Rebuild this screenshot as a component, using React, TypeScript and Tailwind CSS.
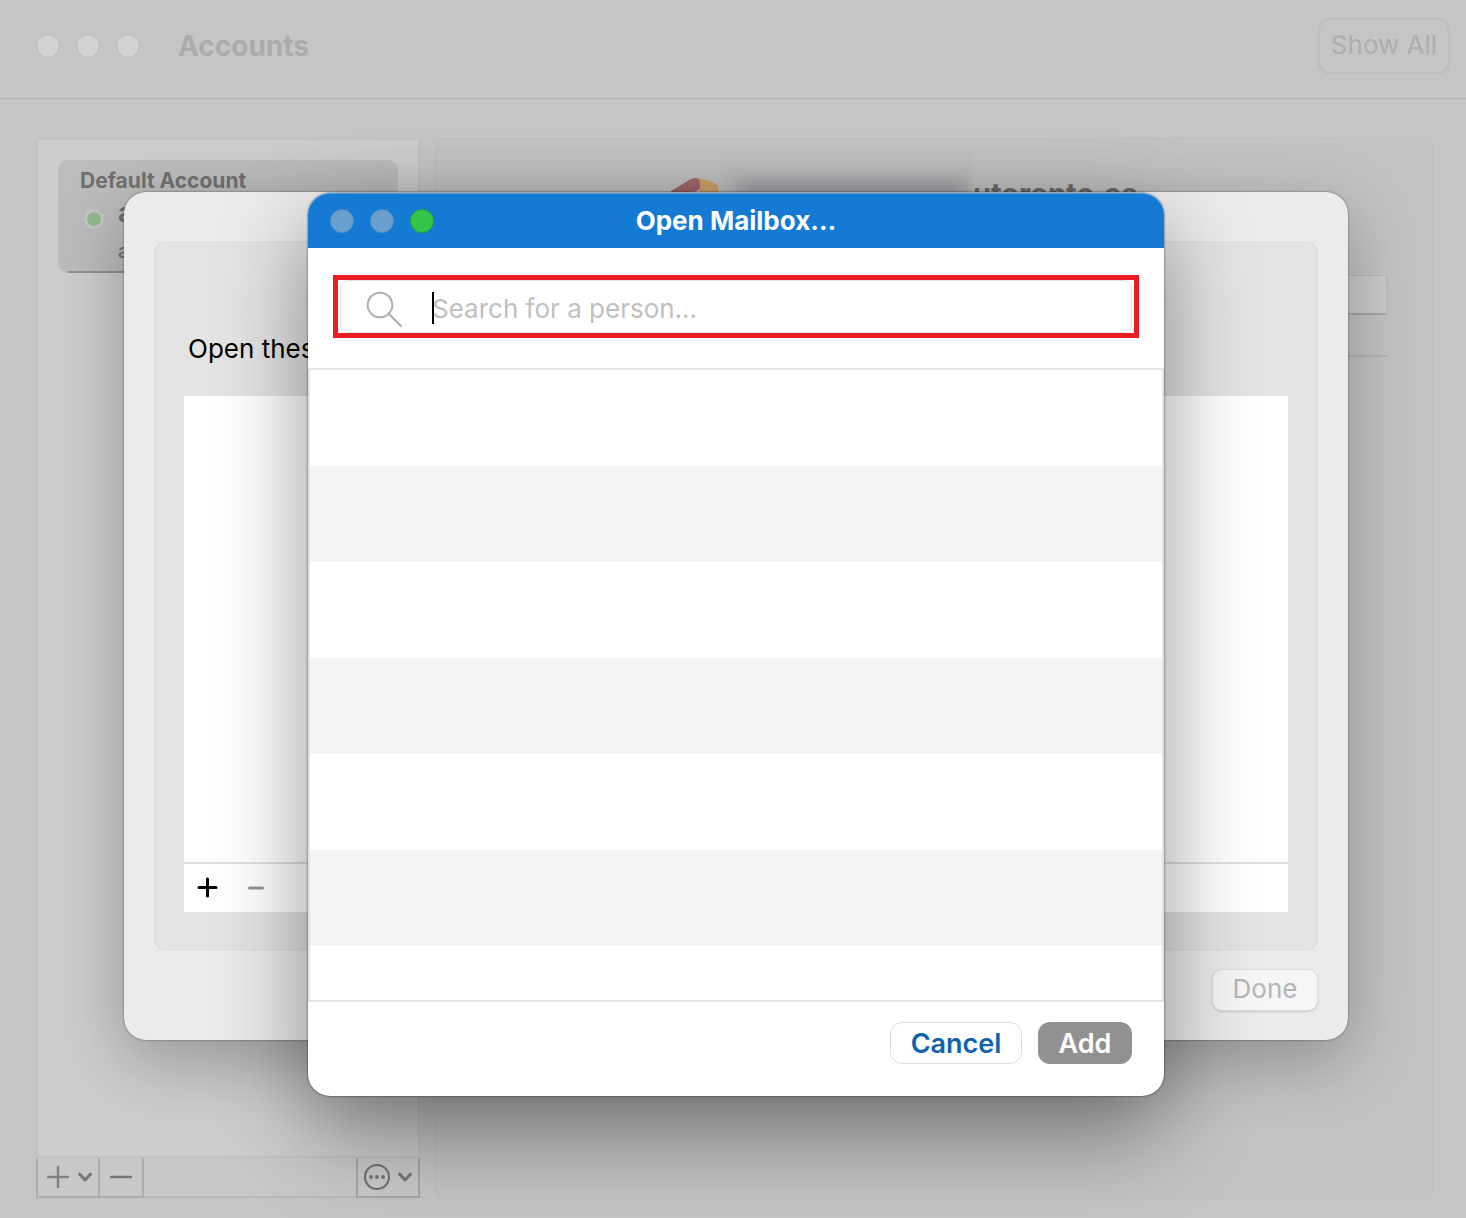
// App.tsx
import { useState } from 'react';

const EMPTY_ROWS = [0, 1, 2, 3, 4, 5];

function ChevronIcon() {
  return (
    <svg width="16" height="12" viewBox="0 0 16 12" fill="none" aria-hidden="true">
      <path d="M2.5 3 8 9l5.5-6" stroke="#757575" strokeWidth="3" strokeLinecap="round" strokeLinejoin="round" />
    </svg>
  );
}

function Sidebar() {
  return (
    <aside className="flex w-96 shrink-0 flex-col pb-[2px]">
      <div className="flex-1 border-2 border-[#c2c2c2] bg-[#cdcdcd] px-5 pt-5">
        <div className="flex h-[113px] flex-col rounded-[10px] bg-[#bcbcbc] pl-[22px] pt-[9px] text-[#707070]">
          <h2 className="text-[21px] font-bold leading-6">Default Account</h2>
          <div className="flex h-[42px] items-end gap-[14px] pl-1 pb-[6px]">
            <span className="h-5 w-5 rounded-full border-[3px] border-[#c6c6c6] bg-[#91bb8e]" />
            <span className="text-[26px] font-bold leading-8">a</span>
          </div>
          <p className="flex-1 pl-[38px] pt-1 text-[20px] font-medium leading-6">a</p>
          <div className="-ml-3 mr-3 h-[2px] bg-[#8f8f8f]" />
        </div>
      </div>
      <div className="flex h-10 border-b-2 border-[#b9b9b9] bg-[#c8c8c8]">
        <button aria-label="Add account" className="-mb-[2px] flex w-[64px] items-center gap-2 border-2 border-t-0 border-[#adadad] pl-[9px]">
          <svg width="22" height="22" viewBox="0 0 22 22" fill="none" aria-hidden="true">
            <path d="M11 1v20M1 11h20" stroke="#808080" strokeWidth="2.4" strokeLinecap="round" />
          </svg>
          <ChevronIcon />
        </button>
        <button aria-label="Remove account" className="-mb-[2px] flex w-11 items-center justify-center border-r-2 border-b-2 border-[#adadad]">
          <svg width="22" height="22" viewBox="0 0 22 22" fill="none" aria-hidden="true">
            <path d="M1 11h20" stroke="#757575" strokeWidth="2.4" strokeLinecap="round" />
          </svg>
        </button>
        <button aria-label="More options" className="-mb-[2px] ml-auto flex w-[64px] items-center gap-[6px] border-2 border-t-0 border-[#a6a6a6] pl-[5px]">
          <svg width="28" height="28" viewBox="0 0 28 28" fill="none" className="shrink-0" aria-hidden="true">
            <circle cx="14" cy="14" r="12" stroke="#707070" strokeWidth="2" />
            <circle cx="8" cy="14" r="1.9" fill="#707070" />
            <circle cx="14" cy="14" r="1.9" fill="#707070" />
            <circle cx="20" cy="14" r="1.9" fill="#707070" />
          </svg>
          <ChevronIcon />
        </button>
      </div>
    </aside>
  );
}

function AccountDetail() {
  return (
    <section className="flex-1 rounded-[10px] border border-[#bfbfbf] bg-[#c3c3c3] px-[46px]">
      <div className="flex h-[136px] items-start justify-center pt-3 pr-[60px]">
        <svg width="50" height="60" viewBox="0 0 50 60" className="mt-[26px]" aria-hidden="true">
          <path d="M0 14 20 2q5-2 9 0v10L14 20v20H0z" fill="#a5686c" />
          <path d="M25 1q18 3 21 7 2 2 2 8v24H29V5q-1-3-4-4z" fill="#d3a468" />
        </svg>
        <span className="h-[60px] w-[252px] overflow-hidden bg-[#c0c0c0]">
          <span className="mt-[28px] ml-4 block h-8 w-[230px] bg-[#a2a4a8] blur-[8px]" />
        </span>
        <span className="pt-[25px] text-[29px] font-bold leading-9 text-[#6c6c6c]">utoronto.ca</span>
      </div>
      <input
        aria-label="Account description"
        className="block h-10 w-full border border-b-2 border-[#b7b7b7] border-b-[#a6a6a6] bg-[#cbcbcb] px-3"
      />
      <div className="mt-10 h-[2px] bg-[#b4b4b4]" />
    </section>
  );
}

function DelegationSheet() {
  return (
    <div className="absolute inset-x-0 top-48 flex justify-center pl-[6px]">
      <div className="flex w-full max-w-[1224px] flex-col rounded-[22px] bg-[#ebebeb] px-[30px] pt-[50px] pb-[29px] shadow-[0_0_2px_rgba(0,0,0,0.6),0_20px_70px_rgba(0,0,0,0.28)]">
        <div className="rounded-[10px] border border-[#d8d8d8] bg-[#e4e4e4] px-[29px] pt-[88px] pb-[37px]">
          <p className="pl-1 text-[26px] leading-9 text-black">Open these</p>
          <div className="mt-[29px] bg-white">
            <div className="h-[466px]" />
            <div className="flex h-[50px] items-center gap-[28px] border-t-2 border-[#e0e0e0] pl-3">
              <button aria-label="Add mailbox">
                <svg width="22" height="22" viewBox="0 0 22 22" fill="none" aria-hidden="true">
                  <path d="M11.5 2v17M3 10.5h17" stroke="#000" strokeWidth="3" strokeLinecap="round" />
                </svg>
              </button>
              <button aria-label="Remove mailbox">
                <svg width="22" height="22" viewBox="0 0 22 22" fill="none" aria-hidden="true">
                  <path d="M3.5 11h13" stroke="#969696" strokeWidth="3" strokeLinecap="round" />
                </svg>
              </button>
            </div>
          </div>
        </div>
        <button className="mt-[19px] h-[42px] w-[106px] self-end rounded-[10px] border border-[#dedede] bg-[#f6f6f6] pb-[2px] text-[26px] leading-8 text-[#b5b5b5] shadow-[0_1px_2px_rgba(0,0,0,0.15)]">
          Done
        </button>
      </div>
    </div>
  );
}

function OpenMailboxDialog() {
  const [query, setQuery] = useState('');

  return (
    <div className="absolute inset-x-0 top-[193px] flex justify-center pl-[6px]">
      <div
        role="dialog"
        aria-labelledby="dialog-title"
        className="w-full max-w-[856px] rounded-[22px] bg-white shadow-[0_0_2px_rgba(0,0,0,0.8),0_36px_90px_rgba(0,0,0,0.42)]"
      >
        <header className="grid h-[55px] grid-cols-[1fr_auto_1fr] items-center rounded-t-[22px] border-t border-[#4a9ce0] bg-[#147ad3] px-[22px]">
          <div className="flex gap-4">
            <button aria-label="Close" className="h-6 w-6 rounded-full border border-[#5590c4] bg-[#6a9fce]" />
            <button aria-label="Minimize" className="h-6 w-6 rounded-full border border-[#5590c4] bg-[#6a9fce]" />
            <button aria-label="Zoom" className="h-6 w-6 rounded-full border border-[#26a338] bg-[#35c649]" />
          </div>
          <h1 id="dialog-title" className="text-[26px] font-bold leading-8 text-white">Open Mailbox…</h1>
        </header>

        <div className="px-[25px] pt-[27px] pb-[30px]">
          <div className="relative flex h-[63px] items-center border-[5px] border-[#ed1c24] px-[2px]">
            <svg width="38" height="38" viewBox="0 0 38 38" fill="none" className="absolute top-[11px] left-[28px]" aria-hidden="true">
              <circle cx="14" cy="14" r="12.3" stroke="#b3afaa" strokeWidth="2" />
              <path d="M22.5 22.5 35 35" stroke="#b3afaa" strokeWidth="2.2" strokeLinecap="round" />
            </svg>
            {/* text cursor */}
            <span className="absolute top-3 left-[94px] h-8 w-[2px] bg-black" />
            <input
              aria-label="Search for a person"
              value={query}
              onChange={(e) => setQuery(e.target.value)}
              placeholder="Search for a person..."
              className="h-full w-full rounded-[8px] border border-[#e2e2e2] pt-1 pl-[91px] text-[26px] text-black outline-none placeholder:text-[#c0c0c0]"
            />
          </div>
        </div>

        <ul className="border-2 border-[#e4e4e4]">
          {EMPTY_ROWS.map((row) => (
            <li key={row} className="h-24 odd:bg-white even:bg-[#f3f5f4]" />
          ))}
          <li className="h-[54px] bg-white" />
        </ul>

        <footer className="flex justify-end gap-4 px-8 pt-5 pb-8">
          <button className="h-[42px] w-[132px] rounded-[12px] border border-[#dedede] bg-white pt-[2px] text-[27px] font-semibold leading-8 text-[#0f62ac]">
            Cancel
          </button>
          <button className="h-[42px] w-[94px] rounded-[12px] bg-[#919191] pt-[2px] text-[27px] font-semibold leading-8 text-white">
            Add
          </button>
        </footer>
      </div>
    </div>
  );
}

export default function App() {
  return (
    <div className="relative flex min-h-screen flex-col bg-[#c5c5c5] font-['Inter','Liberation_Sans',sans-serif]">
      <header className="flex h-[99px] items-start border-b border-[#b3b3b3] pl-9 pr-4 pt-[18px]">
        <div className="flex h-14 items-center gap-4">
          <button aria-label="Close window" className="h-6 w-6 rounded-full border border-[#b8b8b8] bg-[#d2d2d2]" />
          <button aria-label="Minimize window" className="h-6 w-6 rounded-full border border-[#b8b8b8] bg-[#d2d2d2]" />
          <button aria-label="Zoom window" className="h-6 w-6 rounded-full border border-[#b8b8b8] bg-[#d2d2d2]" />
          <h1 className="pl-[22px] text-[28px] font-bold leading-9 text-[#ababab]">Accounts</h1>
        </div>
        <button className="ml-auto h-14 w-[132px] rounded-[12px] border-2 border-[#bdbdbd] pb-[2px] text-[26px] leading-8 text-[#adadad]">
          Show All
        </button>
      </header>
      <main className="flex flex-1 gap-[15px] pl-9 pr-8 pt-[39px] pb-[18px]">
        <Sidebar />
        <AccountDetail />
      </main>
      <DelegationSheet />
      <OpenMailboxDialog />
    </div>
  );
}
